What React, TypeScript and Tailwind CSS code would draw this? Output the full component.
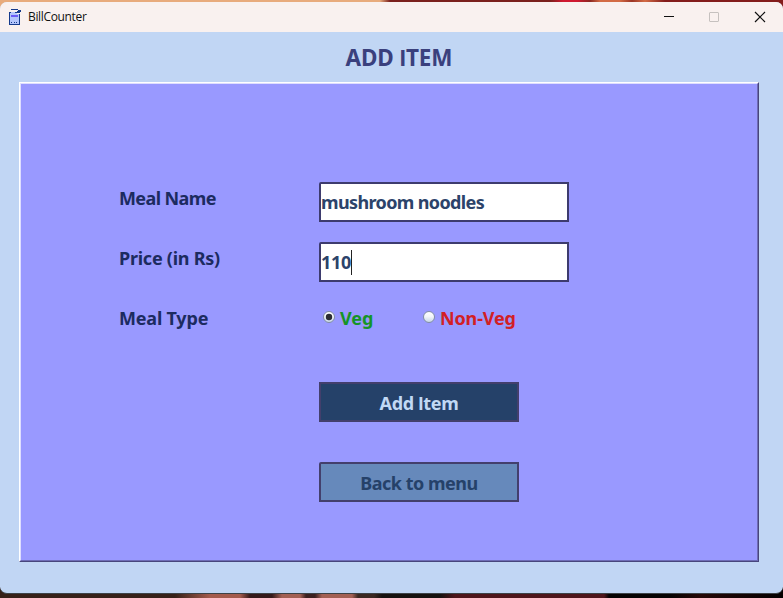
import { useState } from "react";

const ui = "font-['Noto_Sans','Open_Sans',sans-serif]";

function TitleBar() {
  return (
    <header className="flex h-[30px] shrink-0 items-center bg-[#f9f1ef] pl-[8px]">
      <svg width="14" height="17" viewBox="0 0 14 17" shapeRendering="crispEdges">
        <path d="M1 3H9V5H11V15H1Z" fill="#b4c6fc" />
        <path d="M1 3h2v1H1zM1 3h1v13H1zM1 15h11v1H1zM11 5h1v11h-1zM3 0h7v1H3zM10 1h3v2h-3zM7 3h5v1H7zM9 2h2v1H9z" fill="#153a8c" />
        <path d="M3 6h7v2H3z" fill="#6b5cf5" />
        <path d="M3 13h1v1H3zM6 13h1v1H6zM8 13h1v1H8z" fill="#153a8c" />
      </svg>
      <span className="ml-[6px] font-['Open_Sans','Noto_Sans',sans-serif] text-[12px] font-normal leading-[16px] tracking-[-0.34px] text-[#111]">BillCounter</span>
      <div className="ml-auto flex items-center pr-[17px]">
        <svg width="12" height="12" viewBox="0 0 12 12" shapeRendering="crispEdges"><path d="M1 5h10v1H1z" fill="#111" /></svg>
        <svg className="ml-[33px]" width="12" height="12" viewBox="0 0 12 12"><rect x="1.5" y="1.5" width="9" height="9" rx=".5" fill="none" stroke="#c6c1bf" /></svg>
        <svg className="ml-[34px]" width="12" height="12" viewBox="0 0 12 12"><path d="M1 1L11 11M11 1L1 11" stroke="#111" strokeWidth="1.2" /></svg>
      </div>
    </header>
  );
}

function Radio({ on }: { on: boolean }) {
  return (
    <svg width="12" height="12" viewBox="0 0 12 12">
      <defs>
        <linearGradient id="shine" x1="0" y1="0" x2="0" y2="1">
          <stop offset="0" stopColor="#ffffff" />
          <stop offset=".45" stopColor="#f3f6fa" />
          <stop offset="1" stopColor="#c5d5e5" />
        </linearGradient>
      </defs>
      <circle cx="6" cy="6" r="5.5" fill="url(#shine)" stroke="#7f8ba6" strokeWidth="1" />
      {on && <circle cx="6" cy="6" r="3.2" fill="#2c2d34" />}
    </svg>
  );
}

function Row({ label, tracking, children }: { label: string; tracking: string; children: React.ReactNode }) {
  return (
    <div className="flex h-[40px]">
      <span className={`w-[200px] pt-[4px] leading-[25px] text-[#1c2b60] ${tracking}`}>{label}</span>
      {children}
    </div>
  );
}

const field = "flex h-[40px] w-[250px] items-center rounded-tl-[2px] border-2 border-[#3d3b6e] bg-white text-[#2c436a]";

export default function App() {
  const [type, setType] = useState("veg");
  return (
    <div className="h-[598px] w-[783px] overflow-hidden bg-[linear-gradient(90deg,#e8ab7c_0_380px,#7b201c_390px_550px,#d01830_563px_577px,#8c2721_590px,#d36b45_600px_620px,#9c3526_632px,#d36b45_645px,#831c1b_665px)] pt-[2px]">
      <div className="bg-[linear-gradient(90deg,#e8ab7c_0_380px,#831c1b_390px)] bg-[length:100%_300px] bg-no-repeat">
        <div className="bg-[linear-gradient(90deg,#362018_0_175px,#a45b4d_210px_240px,#35191a_250px_272px,#a36054_282px_300px,#3c2020_306px_315px,#a36054_322px_352px,#3b2822_358px_374px,#16110f_382px_440px,#4e151b_455px_604px,#060202_609px_670px,#260807_700px,#050000_780px)] bg-[length:100%_300px] bg-bottom bg-no-repeat pb-[4px]">
          <div className={`${ui} flex h-[592px] flex-col overflow-hidden rounded-[7px] border-b border-[#3c4247] bg-[#c1d6f4] text-[18px] font-bold`}>
            <TitleBar />
            <h1 className="h-[50px] pl-[15px] pt-[11px] text-center text-[22.5px] leading-[30px] tracking-[-0.1px] text-[#3a407d]">ADD <span className="font-[Roboto]">I</span>TEM</h1>
            <main className="ml-[19px] h-[480px] w-[740px] border border-b-[#48467c] border-l-white border-r-[#48467c] border-t-white">
              <div className="h-full border border-b-[#6e6cb5] border-l-[#dedeff] border-r-[#6e6cb5] border-t-[#dedeff] bg-[#9999ff] pl-[98px] pt-[98px]">
                <div className="flex flex-col gap-[20px]">
                  <Row label="Meal Name" tracking="tracking-[-0.6px]"><div className={field}><span className="tracking-[-0.63px]">mushroom noodles</span></div></Row>
                  <Row label="Price (in Rs)" tracking="tracking-[-0.25px]"><div className={field}><span className="tracking-[-0.3px]">110</span><i className="h-[25px] w-px bg-[#222]" /></div></Row>
                  <Row label="Meal Type" tracking="tracking-[-0.2px]">
                    <button className="flex h-[25px] w-[100px] items-start pl-[4px]" onClick={() => setType("veg")}>
                      <span className="pt-[9px]"><Radio on={type === "veg"} /></span>
                      <span className="ml-[5px] mt-[4px] leading-[25px] tracking-[-0.1px] text-[#159427]">Veg</span>
                    </button>
                    <button className="flex h-[25px] items-start pl-[4px]" onClick={() => setType("non")}>
                      <span className="pt-[9px]"><Radio on={type === "non"} /></span>
                      <span className="ml-[5px] mt-[4px] leading-[25px] tracking-[-0.15px] text-[#d21f25]">Non-Veg</span>
                    </button>
                  </Row>
                </div>
                <div className="ml-[200px] mt-[40px] flex w-[200px] flex-col gap-[40px]">
                  <button className="h-[40px] border-2 border-[#433f6c] bg-[#254169] pt-[3px] leading-[25px] tracking-[-0.3px] text-[#c1d9f5]">Add <span className="font-[Roboto]">I</span>tem</button>
                  <button className="h-[40px] rounded-tl-[2px] border-2 border-[#433f6c] bg-[#6689bb] pt-[3px] leading-[25px] tracking-[-0.5px] text-[#254169]">Back to menu</button>
                </div>
              </div>
            </main>
          </div>
        </div>
      </div>
    </div>
  );
}
